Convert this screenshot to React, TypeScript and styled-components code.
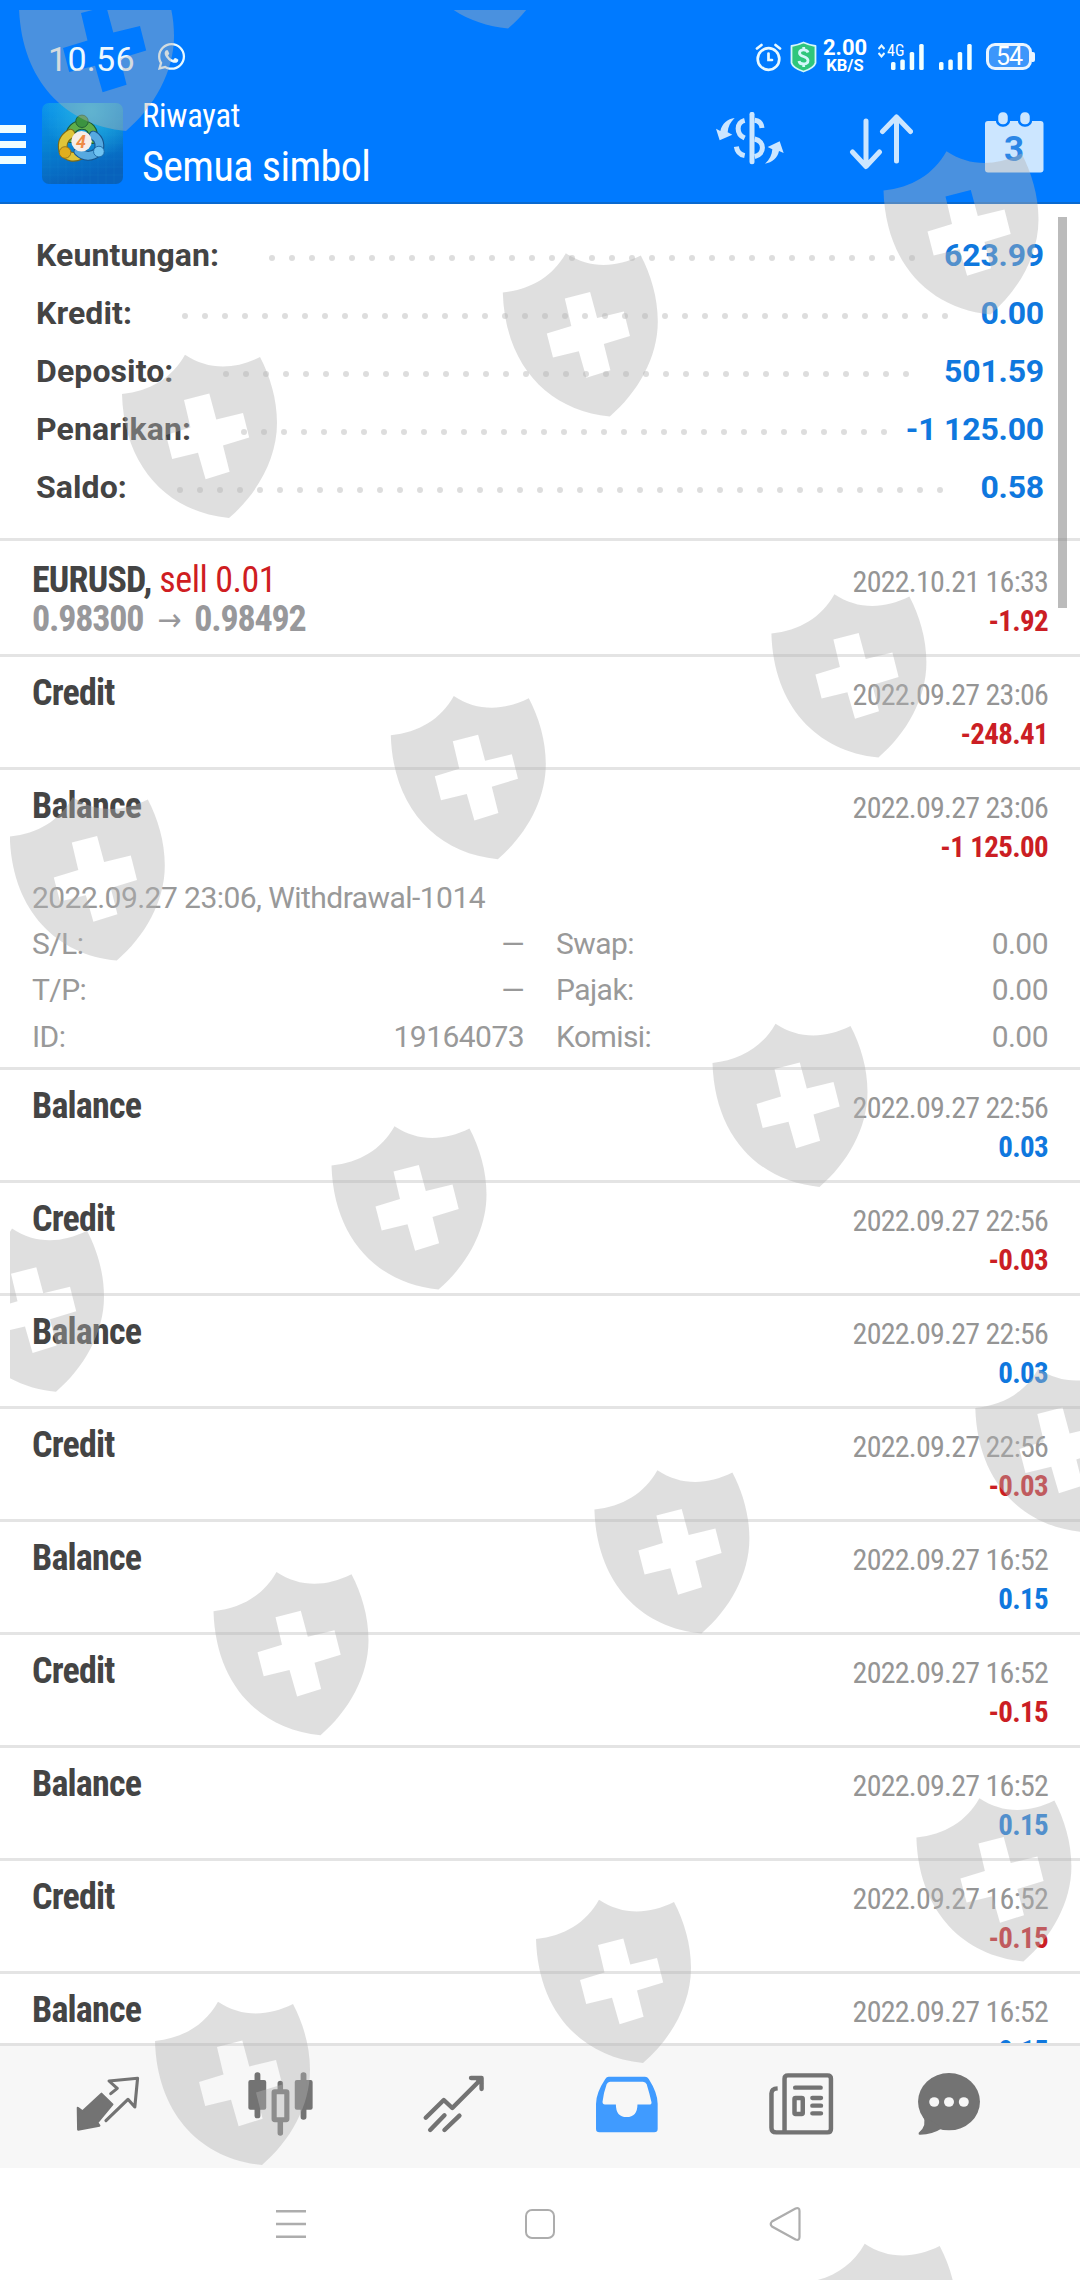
import React from "react";
import { FaWhatsapp } from "react-icons/fa";
import styled, { createGlobalStyle, css } from "styled-components";

const GlobalStyle = createGlobalStyle`
    body {
        margin: 0;
        background: #ffffff;
        font-family: "Roboto", "Liberation Sans", sans-serif;
    }
    #root {
        height: 2280px;
    }
    svg {
        display: block;
    }
`;

const condensed = css`
    font-family: "Roboto Condensed", "Roboto", sans-serif;
    font-stretch: 75%;
`;

const Screen = styled.div`
    position: relative;
    width: 1080px;
    height: 2280px;
    overflow: hidden;
    display: flex;
    flex-direction: column;
`;

const Header = styled.header`
    height: 204px;
    box-sizing: border-box;
    background: #007aff;
    border-bottom: 2px solid #0a69cf;
    color: white;
    flex: none;
`;

const StatusBar = styled.div`
    height: 90px;
    box-sizing: border-box;
    padding: 23px 45px 0 48px;
    display: flex;
    align-items: center;
`;

const Clock = styled.span`
    width: 108px;
    padding-top: 5px;
    font-size: 34px;
    font-weight: 400;
    letter-spacing: 0.3px;
    color: #ecf8ff;
`;

const StatusRight = styled.div`
    margin-left: auto;
    display: flex;
    align-items: center;
`;

const NetSpeed = styled.div`
    width: 46px;
    margin: 0 10px 0 5px;
    text-align: center;
    font-weight: 700;
    font-size: 22px;
    line-height: 18px;
`;

const NetUnit = styled.div`
    font-size: 16.5px;
    line-height: 17px;
`;

const Network = styled.span`
    ${condensed}
    font-size: 16px;
`;

const Battery = styled.div`
    width: 46px;
    height: 27px;
    margin-left: 14px;
    box-sizing: border-box;
    border: 3px solid #e9f4ff;
    border-radius: 9px;
    background: #3c96fb;
    font-size: 25px;
    line-height: 22px;
    text-align: center;
    letter-spacing: -1px;
`;

const BatteryNub = styled.div`
    width: 3px;
    height: 10px;
    border-radius: 0 2px 2px 0;
    background: #e9f4ff;
`;

const Toolbar = styled.div`
    height: 112px;
    display: flex;
    align-items: flex-start;
`;

const MenuButton = styled.div`
    width: 26px;
    margin: 35px 16px 0 0;
    display: flex;
    flex-direction: column;
    gap: 8px;
`;

const MenuBar = styled.div`
    height: 7.5px;
    background: #eefdff;
`;

const AppIcon = styled.div`
    width: 81px;
    height: 81px;
    margin-top: 13px;
    border-radius: 7px;
    overflow: hidden;
`;

const TitleBlock = styled.div`
    ${condensed}
    flex: 1;
    margin-left: 19px;
    padding-top: 6px;
`;

const SmallTitle = styled.div`
    font-size: 32.5px;
    line-height: 40px;
    letter-spacing: -0.2px;
`;

const BigTitle = styled.div`
    font-size: 42px;
    line-height: 62px;
    letter-spacing: -0.55px;
`;

const ToolIcons = styled.div`
    display: flex;
    padding: 22px 36px 0 0;
`;

const ToolIcon = styled.div<{ gap: number }>`
    margin-left: ${({ gap }) => gap}px;
`;

const Summary = styled.section`
    height: 337px;
    flex: none;
    box-sizing: border-box;
    padding: 22px 36px 0;
    border-bottom: 3px solid #e4e4e4;
    font-size: 32px;
    font-weight: 700;
`;

const SummaryRow = styled.div`
    height: 58px;
    display: flex;
    align-items: center;
`;

const SummaryLabel = styled.span`
    color: #444444;
    letter-spacing: 0.1px;
`;

const SummaryValue = styled.span`
    color: #0f78de;
    letter-spacing: -0.2px;
`;

// はみ出した点は折り返して隠す
const Dots = styled.div`
    flex: 1;
    height: 7px;
    margin: 6px 10.5px 0 43px;
    display: flex;
    flex-wrap: wrap;
    overflow: hidden;
`;

const Dot = styled.span`
    width: 6px;
    height: 6px;
    margin: 0 7px 7px;
    border-radius: 50%;
    background: #dddddd;
`;

const List = styled.main`
    height: 1502px;
    flex: none;
    overflow: hidden;
`;

const Row = styled.div<{ first?: boolean }>`
    ${condensed}
    min-height: ${({ first }) => (first ? 116 : 113)}px;
    box-sizing: border-box;
    padding: ${({ first }) => (first ? 3 : 0)}px 32px 0;
    border-bottom: 3px solid #e4e4e4;
`;

const RowMain = styled.div`
    height: 96px;
    display: flex;
    justify-content: space-between;
`;

const RowLeft = styled.div`
    padding-top: 17px;
    font-size: 36px;
    line-height: 39px;
    font-weight: 700;
    letter-spacing: -0.8px;
    color: #444444;
`;

const SellText = styled.span`
    font-weight: 400;
    letter-spacing: -0.45px;
    color: #cf1d22;
`;

const PriceText = styled.div`
    letter-spacing: -1.2px;
    color: #98989b;
`;

const Arrow = styled.span`
    font-family: "DejaVu Sans", sans-serif;
    font-size: 32px;
    font-weight: 400;
    line-height: 1;
    margin: 0 7px;
`;

const RowRight = styled.div`
    padding-top: 19px;
    font-size: 30px;
    line-height: 38.5px;
    letter-spacing: -0.75px;
    text-align: right;
    color: #959595;
`;

const Amount = styled.div<{ minus: boolean }>`
    font-size: 29px;
    font-weight: 700;
    letter-spacing: -0.65px;
    color: ${({ minus }) => (minus ? "#cb1e24" : "#0f78de")};
`;

const Detail = styled.div`
    box-sizing: border-box;
    height: 201px;
    padding-top: 8.5px;
    font-family: "Roboto", sans-serif;
    font-stretch: 100%;
    font-size: 30px;
    font-weight: 400;
    line-height: 46.4px;
    letter-spacing: -0.55px;
    color: #999999;
`;

const DetailGrid = styled.div`
    display: grid;
    grid-template-columns: 492px 492px;
    column-gap: 32px;
`;

const DetailItem = styled.div`
    display: flex;
    justify-content: space-between;
`;

const TabBar = styled.nav`
    height: 125px;
    flex: none;
    box-sizing: border-box;
    padding-left: 21px;
    border-top: 3px solid #e2e2e2;
    background: #f7f7f7;
    display: flex;
`;

const Tab = styled.div<{ width?: number }>`
    width: ${({ width }) => width ?? 173}px;
    height: 116px;
    display: flex;
    align-items: center;
    justify-content: center;
`;

const SystemBar = styled.div`
    flex: 1;
    display: flex;
    justify-content: space-between;
    align-items: center;
    padding: 0 279px 0 275px;
`;

const HomeButton = styled.div`
    width: 30px;
    height: 30px;
    margin-left: 4px;
    box-sizing: border-box;
    border: 2px solid #adadad;
    border-radius: 7px;
`;

const ScrollThumb = styled.div`
    position: absolute;
    left: 1058px;
    top: 217px;
    width: 9px;
    height: 391px;
    background: rgba(120, 120, 120, 0.5);
`;

const WatermarkLayer = styled.svg`
    position: absolute;
    left: 0;
    top: 0;
    pointer-events: none;
`;

const SHIELDS = [
    [19, -33], [401, -135.5], [883.5, 150.5], [122, 354], [502.8, 252.5],
    [771.4, 593.5], [390.8, 695.2], [9.8, 796.6], [712.5, 1023], [331.5, 1125.5],
    [-51, 1227.7], [975.3, 1368], [594.4, 1469.5], [213.5, 1571.3], [916.4, 1797.5],
    [536, 1899], [155, 2001], [801.7, 2243],
];

const SUMMARY = [
    { label: "Keuntungan:", value: "623.99" },
    { label: "Kredit:", value: "0.00" },
    { label: "Deposito:", value: "501.59" },
    { label: "Penarikan:", value: "-1 125.00" },
    { label: "Saldo:", value: "0.58" },
];

type historyType = {
    title: string,
    time: string,
    amount: string,
    trade?: boolean,
    detail?: boolean,
}

const HISTORY: historyType[] = [
    { title: "EURUSD,", time: "2022.10.21 16:33", amount: "-1.92", trade: true },
    { title: "Credit", time: "2022.09.27 23:06", amount: "-248.41" },
    { title: "Balance", time: "2022.09.27 23:06", amount: "-1 125.00", detail: true },
    { title: "Balance", time: "2022.09.27 22:56", amount: "0.03" },
    { title: "Credit", time: "2022.09.27 22:56", amount: "-0.03" },
    { title: "Balance", time: "2022.09.27 22:56", amount: "0.03" },
    { title: "Credit", time: "2022.09.27 22:56", amount: "-0.03" },
    { title: "Balance", time: "2022.09.27 16:52", amount: "0.15" },
    { title: "Credit", time: "2022.09.27 16:52", amount: "-0.15" },
    { title: "Balance", time: "2022.09.27 16:52", amount: "0.15" },
    { title: "Credit", time: "2022.09.27 16:52", amount: "-0.15" },
    { title: "Balance", time: "2022.09.27 16:52", amount: "0.15" },
];

const DETAIL = [
    ["S/L:", "—"], ["Swap:", "0.00"],
    ["T/P:", "—"], ["Pajak:", "0.00"],
    ["ID:", "19164073"], ["Komisi:", "0.00"],
];

function Watermark() {
    return (
        <WatermarkLayer width="1080" height="2280" viewBox="0 0 1080 2280">
            <defs>
                <clipPath id="area">
                    <rect x="10" y="10" width="1070" height="2270" />
                </clipPath>
                <path
                    id="shield"
                    fillRule="evenodd"
                    d="M0 40C28 37 50 24 63 .7C86 16 112 16 138 3C148 22 155 45 155 69C155 105 135 140 107 164C45 158 2 112 0 40Z
                       M62 46L87.300 39.500L94.300 65.500L121 59L127.200 83.500L101 91.500L107.600 117.700L83.600 125.200L76 98.700L50.200 105L44 81L68.500 73.500Z"
                />
            </defs>
            <g clipPath="url(#area)" fill="#b2b2b2" fillOpacity="0.416">
                {SHIELDS.map(([x, y]) => (
                    <use key={`${x}-${y}`} href="#shield" x={x} y={y} />
                ))}
            </g>
        </WatermarkLayer>
    );
}

function AlarmIcon() {
    return (
        <svg width="27" height="30" viewBox="0 0 27 30" fill="none" stroke="#e9f9ff" strokeWidth="2.7" strokeLinecap="round">
            <circle cx="13.500" cy="17" r="10.800" />
            <path d="M13.500 11.500V18H17M2 6.500L6.500 3M25 6.500L20.500 3" />
        </svg>
    );
}

const MoneyShield = styled.svg`
    margin-left: 8px;
`;

function MoneyShieldIcon() {
    return (
        <MoneyShield width="27" height="32" viewBox="0 0 27 32">
            <path
                d="M13.500 1.500Q19 4 25.500 5V22Q24 27 13.500 30.500Q3 27 1.500 22V5Q8 4 13.500 1.500Z"
                fill="#2fc67c" stroke="#d4f7fa" strokeWidth="1.800" strokeLinejoin="round"
            />
            <path
                d="M18 11.500C17 8 9.500 8 9.500 12C9.500 16.500 18 14.500 18 19.500C18 24 9.500 24 9 20M13.700 6V9M13.700 22.500V26"
                fill="none" stroke="#d4f7fa" strokeWidth="2.800"
            />
        </MoneyShield>
    );
}

function SignalIcon() {
    return (
        <svg width="33" height="26" viewBox="0 0 33 26" fill="#f2ffff">
            <rect x="0" y="18" width="4.500" height="8" rx="1.500" />
            <rect x="9.300" y="15.500" width="4.500" height="10.500" rx="1.500" />
            <rect x="18.700" y="8" width="4.500" height="18" rx="1.500" />
            <rect x="28.200" y="0" width="4.500" height="26" rx="1.500" />
        </svg>
    );
}

const MobileSignal = styled.div`
    position: relative;
    padding-left: 13px;
    margin-right: 15px;
`;

const MobileType = styled.div`
    position: absolute;
    left: 0;
    top: -1px;
    display: flex;
    align-items: center;
    gap: 2px;
    line-height: 16px;
`;

function LogoIcon() {
    return (
        <svg width="81" height="81" viewBox="41 103 81 81">
            <defs>
                <linearGradient id="bg" x1="0" y1="0" x2="0.300" y2="1">
                    <stop offset="0" stopColor="#0a93ee" />
                    <stop offset="0.500" stopColor="#0682d3" />
                    <stop offset="1" stopColor="#0862bc" />
                </linearGradient>
                <radialGradient id="glow" cx="0.600" cy="0.100" r="0.600">
                    <stop offset="0" stopColor="#2fc0e6" stopOpacity="0.800" />
                    <stop offset="1" stopColor="#2fc0e6" stopOpacity="0" />
                </radialGradient>
            </defs>
            <rect x="41" y="103" width="81" height="81" fill="url(#bg)" />
            <rect x="41" y="103" width="81" height="81" fill="url(#glow)" />
            <path
                d="M49 103V184M57 103V184M65 103V184M73 103V184M81 103V184M89 103V184M97 103V184M105 103V184M113 103V184M41 111H122M41 119H122M41 127H122M41 135H122M41 143H122M41 151H122M41 159H122M41 167H122M41 175H122"
                stroke="#3fb3e8" strokeOpacity="0.080" fill="none"
            />
            <g transform="translate(8 14.500) scale(0.890)">
                <g fill="none" strokeLinecap="round">
                    <path d="M69 139C68 129 75 124 82 124C90 124 96 130 94 140" stroke="#1c5a33" strokeWidth="11" />
                    <path d="M69 139C68 129 75 124 82 124C90 124 96 130 94 140" stroke="#5fae4a" strokeWidth="8.500" />
                    <path d="M69 134C61 139 59 145 61 153C65 161 74 161 80 158" stroke="#7d6a17" strokeWidth="11" />
                    <path d="M69 134C61 139 59 145 61 153C65 161 74 161 80 158" stroke="#dfc53a" strokeWidth="8.500" />
                    <path d="M95 136C102 140 103 148 100 154C93 161 84 160 78 154" stroke="#17568f" strokeWidth="11" />
                    <path d="M95 136C102 140 103 148 100 154C93 161 84 160 78 154" stroke="#56a9e0" strokeWidth="8.500" />
                </g>
                <circle cx="82" cy="120" r="7" fill="#3c9340" stroke="#1c5a33" />
                <circle cx="63" cy="155" r="6.500" fill="#e0ae1e" stroke="#94701a" />
                <circle cx="101" cy="154" r="6" fill="#6fc3f2" stroke="#1a66a5" />
                <circle cx="81.500" cy="142.500" r="11.500" fill="#f6ede8" />
                <text x="81" y="150" textAnchor="middle" fontSize="20" fontWeight="700" fontStyle="italic" fill="#ee8a45">4</text>
            </g>
        </svg>
    );
}

function CurrencyIcon() {
    return (
        <svg width="68" height="53" viewBox="49 256 204 159" fill="none" stroke="#cce6ff" strokeWidth="15">
            <path d="M157 263V405" strokeLinecap="round" />
            <path d="M135 281C110 287 108 322 135 334M165 281C178 283 186 292 187 304M165 337C196 344 196 382 165 390M110 360C112 374 120 384 135 387" />
            <g fill="#cce6ff" stroke="none">
                <path d="M105 274C84 276 67 291 62 313L49 306L60 341L98 324L84 317C85 300 92 286 105 274Z" />
                <path d="M196 411C217 408 234 394 238 373L252 379L240 344L204 361L218 368C217 385 210 399 196 411Z" />
            </g>
        </svg>
    );
}

function SortIcon() {
    return (
        <svg width="64" height="58" viewBox="0 0 64 58" fill="none" stroke="#cce6ff" strokeWidth="5" strokeLinecap="round" strokeLinejoin="round">
            <path d="M17 9V54M3.500 40L17 54.500L30.500 40" />
            <path d="M47.500 49V5M33.500 19.500L47.500 5L61.500 19.500" />
        </svg>
    );
}

function CalendarIcon() {
    return (
        <svg width="60" height="62" viewBox="0 0 60 62">
            <rect x="1" y="9" width="58.500" height="51.500" rx="3" fill="#cce6ff" />
            <g fill="#cce6ff" stroke="#007aff" strokeWidth="2.500">
                <rect x="13" y="-1" width="12" height="14.500" rx="5.500" />
                <rect x="35" y="-1" width="12" height="14.500" rx="5.500" />
            </g>
            <text x="30" y="49" textAnchor="middle" fontSize="35" fontWeight="700" fill="#2b86e6">3</text>
        </svg>
    );
}

function QuotesIcon() {
    return (
        <svg width="66" height="58" viewBox="217 139 192 174" preserveAspectRatio="none" fill="none" stroke="#737373" strokeLinejoin="round" strokeLinecap="round">
            <path d="M225 237L239 248L294 195L326 227L282 282L288 291L226 303Z" fill="#737373" strokeWidth="6" />
            <path d="M321 195L340 179L316 157L399 149L391 235L371 212L307 276" strokeWidth="9" />
        </svg>
    );
}

function ChartsIcon() {
    return (
        <svg width="66" height="66" viewBox="719 126 192 198" preserveAspectRatio="none" fill="#737373">
            <rect x="720" y="153" width="52" height="89" rx="6" />
            <rect x="738" y="130" width="17" height="138" rx="8" />
            <rect x="855" y="153" width="52" height="89" rx="6" />
            <rect x="872" y="130" width="17" height="142" rx="8" />
            <rect x="795" y="188" width="37" height="84" rx="2" fill="none" stroke="#737373" strokeWidth="15" />
            <path d="M805 184V163Q805 155 813 155Q821 155 821 163V184ZM805 276V312Q805 320 813 320Q821 320 821 312V276Z" />
        </svg>
    );
}

function TradeIcon() {
    return (
        <svg width="64" height="60" viewBox="1223 132 188 180" preserveAspectRatio="none" fill="none" stroke="#737373" strokeWidth="13" strokeLinecap="round" strokeLinejoin="round">
            <path d="M1234 263L1287 210L1312 234L1392 152" />
            <path d="M1367 144H1398V177M1384 144L1398 160" />
            <path d="M1247 300L1289 256M1289 300L1333 257" />
        </svg>
    );
}

function InboxIcon() {
    return (
        <svg width="63" height="57" viewBox="160 346 184 172" preserveAspectRatio="none">
            <path
                fill="#409bff"
                fillRule="evenodd"
                d="M200 348H306Q313 348 317 355Q343 397 343 430V506Q343 516 333 516H173Q163 516 163 506V430Q163 397 190 355Q194 348 200 348Z
                   M204 363Q197 363 194 371Q184 400 182 424Q182 432 189 432H221Q221 470 252 470Q284 470 284 432H318Q326 432 325 425Q320 402 311 371Q308 363 300 363Z"
            />
        </svg>
    );
}

function NewsIcon() {
    return (
        <svg width="66" height="64" viewBox="660 336 192 192" preserveAspectRatio="none" fill="none" stroke="#737373" strokeWidth="13" overflow="visible">
            <path d="M691 385Q673 386 673 400V503Q673 517 687 517H836Q846 517 846 507V356Q846 346 836 346H721Q711 346 711 356V517" />
            <path d="M742 383H816M792 414H817M792 437H817M792 460H817" strokeLinecap="round" />
            <rect x="740" y="414" width="24" height="48" rx="3" />
        </svg>
    );
}

function ChatIcon() {
    return (
        <svg width="64" height="64" viewBox="1095 336 186 192" preserveAspectRatio="none" fill="#737373">
            <ellipse cx="1188" cy="425" rx="90" ry="86" />
            <path d="M1112 465Q1126 497 1100 518Q1098 525 1104 524Q1140 524 1168 505Z" />
            <g fill="#f7f7f7">
                <circle cx="1145" cy="426" r="14.500" />
                <circle cx="1188" cy="426" r="14.500" />
                <circle cx="1231" cy="426" r="14.500" />
            </g>
        </svg>
    );
}

function HistoryRow({ item, first }: { item: historyType, first: boolean }) {
    return (
        <Row first={first}>
            <RowMain>
                <RowLeft>
                    {item.title}
                    {item.trade && (
                        <React.Fragment>
                            <SellText> sell 0.01</SellText>
                            <PriceText>
                                0.98300 <Arrow>→</Arrow> 0.98492
                            </PriceText>
                        </React.Fragment>
                    )}
                </RowLeft>
                <RowRight>
                    {item.time}
                    <Amount minus={item.amount.startsWith("-")}>{item.amount}</Amount>
                </RowRight>
            </RowMain>
            {item.detail && (
                <Detail>
                    2022.09.27 23:06, Withdrawal-1014
                    <DetailGrid>
                        {DETAIL.map(([label, value]) => (
                            <DetailItem key={label}>
                                <span>{label}</span>
                                <span>{value}</span>
                            </DetailItem>
                        ))}
                    </DetailGrid>
                </Detail>
            )}
        </Row>
    );
}

export default function App() {
    return (
        <Screen>
            <GlobalStyle />
            <Header>
                <StatusBar>
                    <Clock>10.56</Clock>
                    <FaWhatsapp size={31} color="#e9f9ff" />
                    <StatusRight>
                        <AlarmIcon />
                        <MoneyShieldIcon />
                        <NetSpeed>
                            2.00
                            <NetUnit>KB/S</NetUnit>
                        </NetSpeed>
                        <MobileSignal>
                            <MobileType>
                                <svg width="7" height="14" viewBox="0 0 7 14" fill="none" stroke="#e9f9ff" strokeWidth="2">
                                    <path d="M.5 5L3.500 1.500L6.500 5M.5 9L3.500 12.500L6.500 9" />
                                </svg>
                                <Network>4G</Network>
                            </MobileType>
                            <SignalIcon />
                        </MobileSignal>
                        <SignalIcon />
                        <Battery>54</Battery>
                        <BatteryNub />
                    </StatusRight>
                </StatusBar>
                <Toolbar>
                    <MenuButton>
                        <MenuBar />
                        <MenuBar />
                        <MenuBar />
                    </MenuButton>
                    <AppIcon>
                        <LogoIcon />
                    </AppIcon>
                    <TitleBlock>
                        <SmallTitle>Riwayat</SmallTitle>
                        <BigTitle>Semua simbol</BigTitle>
                    </TitleBlock>
                    <ToolIcons>
                        <ToolIcon gap={0}><CurrencyIcon /></ToolIcon>
                        <ToolIcon gap={65}><SortIcon /></ToolIcon>
                        <ToolIcon gap={71}><CalendarIcon /></ToolIcon>
                    </ToolIcons>
                </Toolbar>
            </Header>
            <Summary>
                {SUMMARY.map(({ label, value }) => (
                    <SummaryRow key={label}>
                        <SummaryLabel>{label}</SummaryLabel>
                        <Dots>
                            {Array.from({ length: 60 }, (_, i) => <Dot key={i} />)}
                        </Dots>
                        <SummaryValue>{value}</SummaryValue>
                    </SummaryRow>
                ))}
            </Summary>
            <List>
                {HISTORY.map((item, i) => (
                    <HistoryRow key={i} item={item} first={i === 0} />
                ))}
            </List>
            <TabBar>
                <Tab><QuotesIcon /></Tab>
                <Tab><ChartsIcon /></Tab>
                <Tab><TradeIcon /></Tab>
                <Tab><InboxIcon /></Tab>
                <Tab><NewsIcon /></Tab>
                <Tab width={125}><ChatIcon /></Tab>
            </TabBar>
            <SystemBar>
                <svg width="32" height="30" viewBox="0 0 32 30" stroke="#adadad" strokeWidth="2.500">
                    <path d="M1 2.200H31M1 15H31M1 27.800H31" />
                </svg>
                <HomeButton />
                <svg width="32" height="36" viewBox="0 0 32 36" fill="none" stroke="#adadad" strokeWidth="2.200">
                    <path d="M26.500 2.500Q30.500 1 30.500 5V31Q30.500 35 26.500 33.500L3 20.500Q.5 18 3 15.500Z" />
                </svg>
            </SystemBar>
            <ScrollThumb />
            <Watermark />
        </Screen>
    );
}
